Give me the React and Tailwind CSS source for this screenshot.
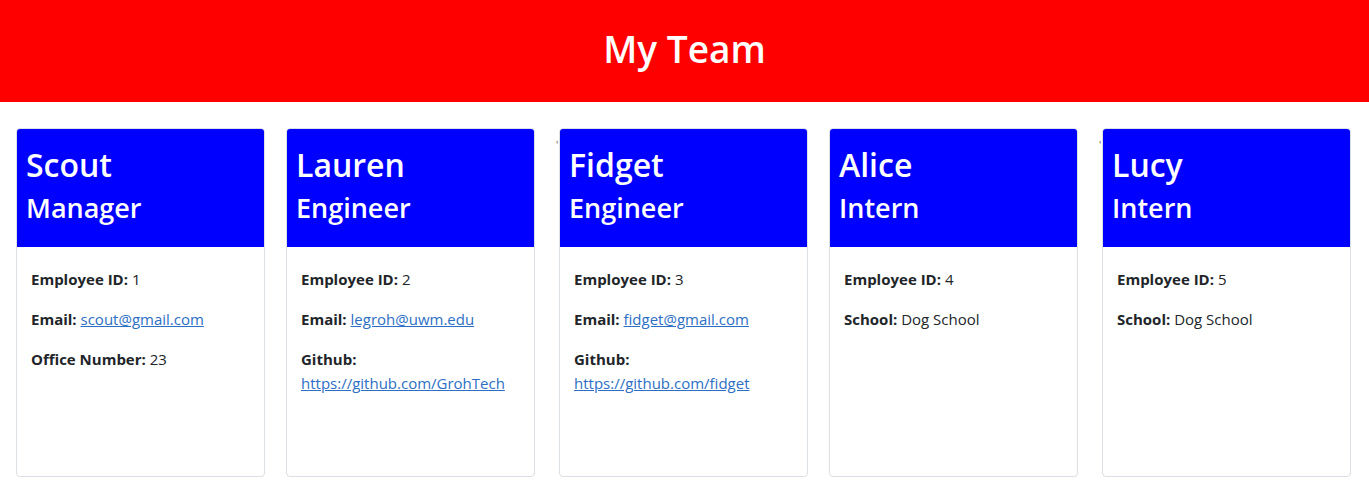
const team = [
  { name: 'Scout', role: 'Manager', id: 1, email: 'scout@gmail.com', extra: { label: 'Office Number:', value: '23' } },
  { name: 'Lauren', role: 'Engineer', id: 2, email: 'legroh@uwm.edu', github: 'https://github.com/GrohTech' },
  { name: 'Fidget', role: 'Engineer', id: 3, email: 'fidget@gmail.com', github: 'https://github.com/fidget', comma: true },
  { name: 'Alice', role: 'Intern', id: 4, extra: { label: 'School:', value: 'Dog School' } },
  { name: 'Lucy', role: 'Intern', id: 5, extra: { label: 'School:', value: 'Dog School' }, comma: true },
]

function EmployeeCard({ person }) {
  return (
    <div className="w-[249px] h-[349px] shrink-0 rounded border border-[#dcdfe3] bg-white overflow-hidden">
      <div className="bg-[#0000ff] text-white px-[9px] pt-[17px] pb-[22px]">
        <h2 className="text-[32px] leading-[38px] font-semibold mb-[7px]">{person.name}</h2>
        <h3 className="text-[27px] leading-[34px] font-semibold">{person.role}</h3>
      </div>
      <div className="pl-[14px] pr-3 pt-5 text-[15px] leading-6 text-[#212529]">
        <p className="mb-4">
          <strong>Employee ID:</strong> {person.id}
        </p>
        {person.email && (
          <p className="mb-4">
            <strong>Email:</strong>{' '}
            <a href="#" className="text-[#2d6fc4] underline">{person.email}</a>
          </p>
        )}
        {person.github && (
          <p className="mb-4">
            <strong>Github:</strong>{' '}
            <a href="#" className="text-[#2d6fc4] underline">{person.github}</a>
          </p>
        )}
        {person.extra && (
          <p className="mb-4">
            <strong>{person.extra.label}</strong> {person.extra.value}
          </p>
        )}
      </div>
    </div>
  )
}

export default function App() {
  return (
    <div className="min-h-[500px] bg-white" style={{ fontFamily: '"Open Sans", "Noto Sans", sans-serif' }}>
      <header className="h-[102px] bg-[#ff0000] flex items-center justify-center pb-1">
        <h1 className="text-white text-[37px] font-semibold">My Team</h1>
      </header>
      <div className="flex items-start pl-4 pt-[26px]">
        {team.map((person, i) => (
          <div key={person.id} className={i === 0 ? 'flex' : 'flex ml-[21px]'}>
            {person.comma && (
              <span className="w-[3px] text-[10px] leading-none text-[#555] mt-[12px]">'</span>
            )}
            <EmployeeCard person={person} />
          </div>
        ))}
      </div>
    </div>
  )
}
